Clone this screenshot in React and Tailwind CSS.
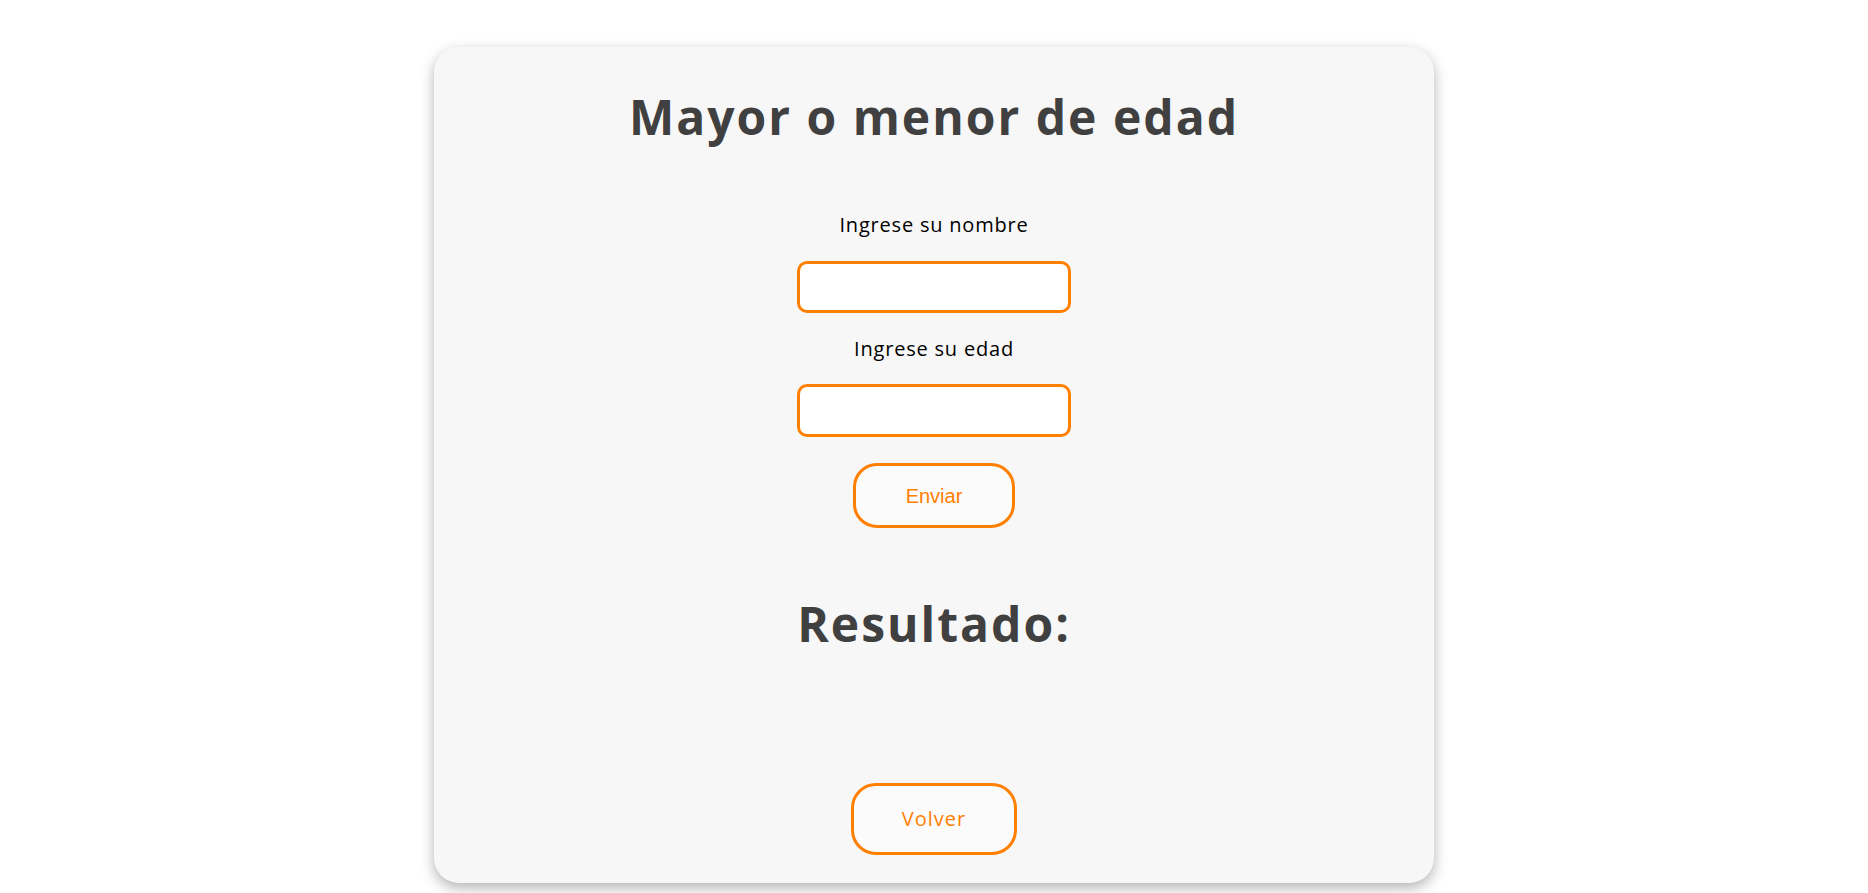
import { useState } from "react";

const headingFont = { fontFamily: '"Open Sans", "Noto Sans", sans-serif' };

const App = () => {
  const [nombre, setNombre] = useState("");
  const [edad, setEdad] = useState("");
  const [resultado, setResultado] = useState("");

  const handleEnviar = (e) => {
    e.preventDefault();
    const n = parseInt(edad, 10);
    if (!nombre || isNaN(n)) {
      setResultado("");
      return;
    }
    setResultado(n >= 18 ? `${nombre} es mayor de edad` : `${nombre} es menor de edad`);
  };

  const handleVolver = () => {
    setNombre("");
    setEdad("");
    setResultado("");
  };

  return (
    <div className="min-h-screen bg-white flex justify-center pt-[47px]" style={headingFont}>
      <div className="w-[1000px] h-[836px] bg-[#f7f7f7] rounded-[25px] shadow-[0_5px_14px_rgba(0,0,0,0.3)] flex flex-col items-center pt-[46px]">
        <h1 className="text-[48px] leading-[48px] font-bold text-[#404040] tracking-[2px]">
          Mayor o menor de edad
        </h1>

        <form onSubmit={handleEnviar} className="flex flex-col items-center">
          <label htmlFor="nombre" className="mt-[72px] text-[20px] leading-[24px] text-black tracking-[0.8px]">
            Ingrese su nombre
          </label>
          <input
            id="nombre"
            type="text"
            value={nombre}
            onChange={(e) => setNombre(e.target.value)}
            className="mt-[24px] w-[274px] h-[52px] bg-white border-[3px] border-[#ff8000] rounded-[10px] px-3 text-[18px] outline-none"
          />
          <label htmlFor="edad" className="mt-[24px] text-[20px] leading-[24px] text-black tracking-[0.8px]">
            Ingrese su edad
          </label>
          <input
            id="edad"
            type="number"
            value={edad}
            onChange={(e) => setEdad(e.target.value)}
            className="mt-[23px] w-[274px] h-[53px] bg-white border-[3px] border-[#ff8000] rounded-[10px] px-3 text-[18px] outline-none"
          />
          <button
            type="submit"
            className="mt-[26px] w-[162px] h-[65px] bg-[#fbfbfb] border-[3px] border-[#ff8000] rounded-[24px] text-[20px] text-[#ff8000]"
            style={{ fontFamily: '"Liberation Sans", Arial, sans-serif' }}
          >
            Enviar
          </button>
        </form>

        <h2 className="mt-[72px] text-[48px] leading-[48px] font-bold text-[#404040] tracking-[2px]">
          Resultado:
        </h2>
        <p className="h-0 text-[20px] text-[#404040]">{resultado}</p>

        <button
          type="button"
          onClick={handleVolver}
          className="mt-[135px] w-[166px] h-[72px] bg-[#fbfbfb] border-[3px] border-[#ff8000] rounded-[25px] text-[20px] text-[#ff8000] tracking-[1px]"
        >
          Volver
        </button>
      </div>
    </div>
  );
};

export default App;
